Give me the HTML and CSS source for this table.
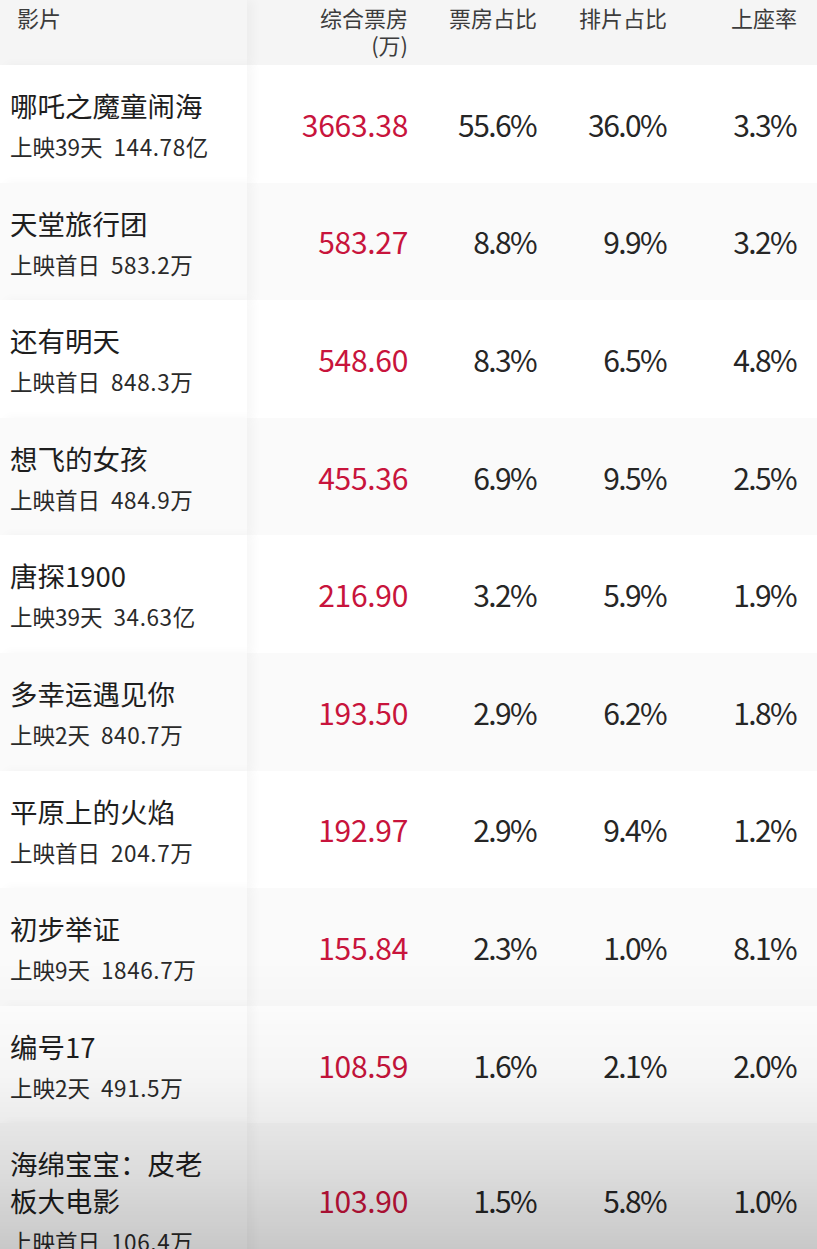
FILE: index.html
```html
<!DOCTYPE html>
<html lang="zh">
<head>
<meta charset="utf-8">
<title>票房</title>
<link rel="stylesheet" href="styles.css">
</head>
<body>
<div class="table">
  <div class="row head">
    <div class="cell name">影片</div>
    <div class="cell num"><div>综合票房</div><div>(万)</div></div>
    <div class="cell num">票房占比</div>
    <div class="cell num">排片占比</div>
    <div class="cell num">上座率</div>
  </div>

  <div class="row">
    <div class="cell name"><div class="title">哪吒之魔童闹海</div><div class="sub"><span>上映39天</span><span class="total">144.78亿</span></div></div>
    <div class="cell num val red">3663.38</div>
    <div class="cell num val pct">55.6%</div>
    <div class="cell num val pct">36.0%</div>
    <div class="cell num val pct">3.3%</div>
  </div>

  <div class="row alt">
    <div class="cell name"><div class="title">天堂旅行团</div><div class="sub"><span>上映首日</span><span class="total">583.2万</span></div></div>
    <div class="cell num val red">583.27</div>
    <div class="cell num val pct">8.8%</div>
    <div class="cell num val pct">9.9%</div>
    <div class="cell num val pct">3.2%</div>
  </div>

  <div class="row">
    <div class="cell name"><div class="title">还有明天</div><div class="sub"><span>上映首日</span><span class="total">848.3万</span></div></div>
    <div class="cell num val red">548.60</div>
    <div class="cell num val pct">8.3%</div>
    <div class="cell num val pct">6.5%</div>
    <div class="cell num val pct">4.8%</div>
  </div>

  <div class="row alt">
    <div class="cell name"><div class="title">想飞的女孩</div><div class="sub"><span>上映首日</span><span class="total">484.9万</span></div></div>
    <div class="cell num val red">455.36</div>
    <div class="cell num val pct">6.9%</div>
    <div class="cell num val pct">9.5%</div>
    <div class="cell num val pct">2.5%</div>
  </div>

  <div class="row">
    <div class="cell name"><div class="title">唐探1900</div><div class="sub"><span>上映39天</span><span class="total">34.63亿</span></div></div>
    <div class="cell num val red">216.90</div>
    <div class="cell num val pct">3.2%</div>
    <div class="cell num val pct">5.9%</div>
    <div class="cell num val pct">1.9%</div>
  </div>

  <div class="row alt">
    <div class="cell name"><div class="title">多幸运遇见你</div><div class="sub"><span>上映2天</span><span class="total">840.7万</span></div></div>
    <div class="cell num val red">193.50</div>
    <div class="cell num val pct">2.9%</div>
    <div class="cell num val pct">6.2%</div>
    <div class="cell num val pct">1.8%</div>
  </div>

  <div class="row">
    <div class="cell name"><div class="title">平原上的火焰</div><div class="sub"><span>上映首日</span><span class="total">204.7万</span></div></div>
    <div class="cell num val red">192.97</div>
    <div class="cell num val pct">2.9%</div>
    <div class="cell num val pct">9.4%</div>
    <div class="cell num val pct">1.2%</div>
  </div>

  <div class="row alt">
    <div class="cell name"><div class="title">初步举证</div><div class="sub"><span>上映9天</span><span class="total">1846.7万</span></div></div>
    <div class="cell num val red">155.84</div>
    <div class="cell num val pct">2.3%</div>
    <div class="cell num val pct">1.0%</div>
    <div class="cell num val pct">8.1%</div>
  </div>

  <div class="row">
    <div class="cell name"><div class="title">编号17</div><div class="sub"><span>上映2天</span><span class="total">491.5万</span></div></div>
    <div class="cell num val red">108.59</div>
    <div class="cell num val pct">1.6%</div>
    <div class="cell num val pct">2.1%</div>
    <div class="cell num val pct">2.0%</div>
  </div>

  <div class="row alt">
    <div class="cell name"><div class="title">海绵宝宝：皮老板大电影</div><div class="sub"><span>上映首日</span><span class="total">106.4万</span></div></div>
    <div class="cell num val red">103.90</div>
    <div class="cell num val pct">1.5%</div>
    <div class="cell num val pct">5.8%</div>
    <div class="cell num val pct">1.0%</div>
  </div>
</div>
<div class="shade"></div>
</body>
</html>
```

FILE: styles.css
```css
html, body {
  margin: 0;
  padding: 0;
  background: #ffffff;
}

body {
  font-family: "Noto Sans CJK SC", "Noto Sans", sans-serif;
  color: #222222;
  width: 817px;
  height: 1249px;
  overflow: hidden;
}

.table {
  display: flex;
  flex-direction: column;
}

.row {
  display: grid;
  grid-template-columns: 247px 161px 129px 130px 130px;
  padding-right: 20px;
  min-height: 117.6px;
  box-sizing: border-box;
  background: #ffffff;
}

.row.alt {
  background: #fafafa;
}

.row.head {
  min-height: 65px;
  background: #f5f5f5;
  color: #3c3c3c;
  font-size: 22px;
  line-height: 27px;
}

.cell {
  box-sizing: border-box;
}

.name {
  background: inherit;
  box-shadow: 6px 0 10px rgba(0, 0, 0, 0.035);
  padding: 22px 30px 20px 10px;
  position: relative;
  z-index: 1;
}

.head .name {
  padding: 4px 0 0 17px;
}

.head .num {
  padding-top: 4px;
  text-align: right;
}

.num {
  text-align: right;
}

.val {
  display: flex;
  align-items: center;
  justify-content: flex-end;
  font-size: 30px;
  letter-spacing: -0.3px;
  color: #262626;
}

.val.pct {
  letter-spacing: -1.6px;
  padding-right: 1px;
}

.val.red {
  color: #c8143c;
}

.title {
  font-size: 27.5px;
  line-height: 37px;
  color: #1e1e1e;
}

.sub {
  margin-top: 8px;
  font-size: 22.5px;
  line-height: 29px;
  color: #2a2a2a;
  white-space: nowrap;
}

.sub .total {
  margin-left: 11px;
  letter-spacing: 0.6px;
}

.shade {
  position: fixed;
  left: 0;
  right: 0;
  top: 960px;
  bottom: 0;
  pointer-events: none;
  background: linear-gradient(to bottom, rgba(0, 0, 0, 0) 0%, rgba(0, 0, 0, 0.04) 40%, rgba(0, 0, 0, 0.12) 75%, rgba(0, 0, 0, 0.2) 100%);
  z-index: 5;
}
```
